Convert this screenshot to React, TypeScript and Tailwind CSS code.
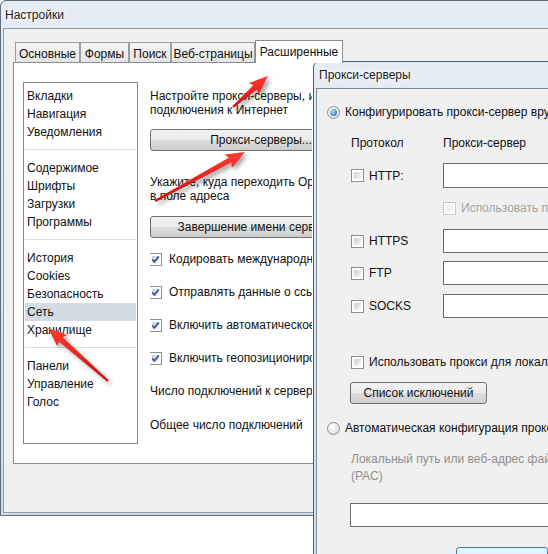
import React from 'react';

const tabs = [
  { label: 'Основные', w: 'w-[65px]' },
  { label: 'Формы', w: 'w-[49px]' },
  { label: 'Поиск', w: 'w-[42px]' },
  { label: 'Веб-страницы', w: 'w-[84px]' },
];

const groups = [
  ['Вкладки', 'Навигация', 'Уведомления'],
  ['Содержимое', 'Шрифты', 'Загрузки', 'Программы'],
  ['История', 'Cookies', 'Безопасность', 'Сеть', 'Хранилище'],
  ['Панели', 'Управление', 'Голос'],
];

const checks = [
  'Кодировать международные веб-адреса в UTF-8',
  'Отправлять данные о ссылающейся странице',
  'Включить автоматическое перенаправление',
  'Включить геопозиционирование',
];

function Check({ checked = false, disabled = false }: { checked?: boolean; disabled?: boolean }) {
  return (
    <span
      className={`relative inline-block h-[13px] w-[13px] shrink-0 border bg-white p-[2px] ${
        disabled ? 'border-[#c8c8c8]' : 'border-[#8e8f8f]'
      }`}
    >
      <span
        className={`block h-full w-full ${
          disabled ? 'bg-[#f0f0f0]' : 'bg-[linear-gradient(135deg,#cdd1d6,#f6f6f6)]'
        }`}
      />
      {checked && (
        <svg className="absolute left-0 top-0" width="11" height="11" viewBox="0 0 11 11">
          <path d="M2.2 5.4 L4.4 7.8 L8.8 2.4" stroke="#4659a2" strokeWidth="1.9" fill="none" />
        </svg>
      )}
    </span>
  );
}

function Radio({ on = false }: { on?: boolean }) {
  return (
    <span className="inline-flex h-[13px] w-[13px] shrink-0 items-center justify-center rounded-full border border-[#8e8f8f] bg-[radial-gradient(circle_at_35%_35%,#ffffff,#d2d6db)]">
      {on && (
        <span className="h-[7px] w-[7px] rounded-full bg-[radial-gradient(circle_at_35%_35%,#b5dcf7,#1c5ba3)]" />
      )}
    </span>
  );
}

function WinButton({ children, className = '' }: { children: React.ReactNode; className?: string }) {
  return (
    <div
      className={`flex shrink-0 items-center justify-center rounded-[3px] border border-[#707070] bg-[linear-gradient(#f2f2f2,#ebebeb_50%,#dddddd_50%,#cfcfcf)] whitespace-nowrap ${className}`}
    >
      {children}
    </div>
  );
}

function arrowPts(x1: number, y1: number, x2: number, y2: number) {
  const dx = x2 - x1;
  const dy = y2 - y1;
  const len = Math.hypot(dx, dy);
  const ux = dx / len;
  const uy = dy / len;
  const nx = -uy;
  const ny = ux;
  const hl = 17;
  const hw = 7.5;
  const bx = x2 - ux * hl;
  const by = y2 - uy * hl;
  const pts = [
    [x1 + nx * 1, y1 + ny * 1],
    [bx + nx * 2.8, by + ny * 2.8],
    [bx - ux * 2 + nx * hw, by - uy * 2 + ny * hw],
    [x2, y2],
    [bx - ux * 2 - nx * hw, by - uy * 2 - ny * hw],
    [bx - nx * 2.8, by - ny * 2.8],
    [x1 - nx * 1, y1 - ny * 1],
  ];
  return pts.map((p) => `${p[0].toFixed(1)},${p[1].toFixed(1)}`).join(' ');
}

const arrows = [
  [233, 107, 268, 76],
  [155, 201, 245, 152],
  [108, 381, 48, 328],
];

export default function App() {
  return (
    <div className="relative h-[554px] w-[548px] overflow-hidden bg-white font-['Liberation_Sans',Arial,sans-serif] text-[12px] text-[#111]">
      {/* orange strip at the top */}
      <div className="absolute left-[147px] top-0 h-[2px] w-[93px] rounded-b bg-[#f0a530]" />

      {/* main settings window */}
      <div className="absolute left-0 top-0 h-[516px] w-[620px] rounded-t-[6px] border border-[#5d6b7a] bg-[linear-gradient(#e6ecf3,#d2dce7)]">
        <div className="flex h-[27px] items-center pl-[4px] text-[12px] text-[#1a1a1a] [text-shadow:0_0_4px_#fff,0_0_6px_#fff,0_0_8px_#fff]">
          Настройки
        </div>
        <div className="ml-[2px] h-[485px] border border-[#8f9caa] bg-[#f0f0f0] pl-[9px] pt-[11px]">
          <div className="ml-[2px] flex h-[22px] items-end">
            {tabs.map((t) => (
              <div
                key={t.label}
                className={`flex h-[20px] ${t.w} items-center justify-center border border-b-0 border-[#9a9ea5] bg-[linear-gradient(#f6f6f6,#e4e4e4)] pt-[2px]`}
              >
                {t.label}
              </div>
            ))}
            <div className="relative z-10 -mb-px flex h-[23px] w-[88px] items-center justify-center border border-b-0 border-[#898c95] bg-white pb-[1px]">
              Расширенные
            </div>
          </div>
          <div className="flex h-[402px] border border-[#898c95] bg-white pl-[9px] pt-[19px]">
            {/* list */}
            <div className="h-[362px] w-[115px] shrink-0 border border-[#828790] px-[1px] pt-[4px]">
              {groups.map((g, gi) => (
                <div key={gi}>
                  {gi > 0 && <div className="mb-[9px] mt-[8px] h-px bg-[#dcdcdc]" />}
                  {g.map((item) => (
                    <div
                      key={item}
                      className={`flex h-[18px] items-center pl-[2px] ${item === 'Сеть' ? 'bg-[#d3dbe5]' : ''}`}
                    >
                      {item}
                    </div>
                  ))}
                </div>
              ))}
            </div>
            {/* right column, clipped where the proxy dialog covers it */}
            <div className="ml-[12px] flex w-[162px] flex-col overflow-hidden whitespace-nowrap">
              <div className="mt-[7px] leading-[14px]">
                <div>Настройте прокси-серверы, используемые для</div>
                <div>подключения к Интернет</div>
              </div>
              <WinButton className="mt-[12px] h-[22px] w-[222px]">Прокси-серверы...</WinButton>
              <div className="mt-[24px] leading-[14px]">
                <div>Укажите, куда переходить Opera, если имя не найдено</div>
                <div>в поле адреса</div>
              </div>
              <WinButton className="mt-[13px] h-[22px] w-[222px]">Завершение имени сервера...</WinButton>
              <div className="mt-[12px] flex flex-col gap-[15px]">
                {checks.map((c) => (
                  <div key={c} className="-ml-[1px] flex h-[18px] items-center gap-[7px]">
                    <Check checked />
                    <span>{c}</span>
                  </div>
                ))}
              </div>
              <div className="mt-[15px] flex h-[18px] items-center">Число подключений к серверу</div>
              <div className="mt-[16px] flex h-[18px] items-center">Общее число подключений</div>
            </div>
          </div>
        </div>
      </div>

      {/* proxy dialog */}
      <div className="absolute left-[313px] top-[61px] h-[520px] w-[360px] rounded-t-[6px] border border-[#4f5d6b] bg-[linear-gradient(#e6ecf3,#d2dce7)]">
        <div className="flex h-[26px] items-center pl-[5px] text-[12px] text-[#1a1a1a] [text-shadow:0_0_4px_#fff,0_0_6px_#fff,0_0_8px_#fff]">
          Прокси-серверы
        </div>
        <div className="ml-[2px] h-[500px] border border-[#7f8c99] bg-[#f0f0f0] pl-[10px] whitespace-nowrap">
          <div className="mt-[16px] flex h-[14px] items-center gap-[5px]">
            <Radio on />
            <span>Конфигурировать прокси-сервер вручную</span>
          </div>
          <div className="ml-[24px]">
            <div className="mt-[17px] flex h-[14px] items-center">
              <span className="w-[92px] shrink-0">Протокол</span>
              <span>Прокси-сервер</span>
            </div>
            <div className="mt-[13px] flex h-[25px] items-center">
              <div className="flex w-[92px] shrink-0 items-center gap-[5px]">
                <Check />
                <span>HTTP:</span>
              </div>
              <div className="h-[25px] w-[180px] shrink-0 border border-[#6b6b6b] bg-white" />
            </div>
            <div className="mt-[13px] flex h-[14px] items-center gap-[5px] pl-[92px] text-[#a3a3a3]">
              <Check disabled />
              <span>Использовать прокси для всех протоколов</span>
            </div>
            {[
              ['HTTPS', 'mt-[14px]'],
              ['FTP', 'mt-[8px]'],
              ['SOCKS', 'mt-[9px]'],
            ].map(([p, mt]) => (
              <div key={p} className={`${mt} flex h-[24px] items-center`}>
                <div className="flex w-[92px] shrink-0 items-center gap-[5px]">
                  <Check />
                  <span>{p}</span>
                </div>
                <div className="h-[24px] w-[180px] shrink-0 border border-[#6b6b6b] bg-white" />
              </div>
            ))}
            <div className="mt-[37px] flex h-[14px] items-center gap-[5px]">
              <Check />
              <span>Использовать прокси для локальных серверов</span>
            </div>
            <WinButton className="-ml-[1px] mt-[13px] h-[22px] w-[137px]">Список исключений</WinButton>
          </div>
          <div className="mt-[17px] flex h-[14px] items-center gap-[5px]">
            <Radio />
            <span>Автоматическая конфигурация прокси-сервера</span>
          </div>
          <div className="ml-[24px] mt-[16px] leading-[17px] text-[#8f8f8f]">
            <div>Локальный путь или веб-адрес файла конфигурации</div>
            <div>(PAC)</div>
          </div>
          <div className="ml-[23px] mt-[18px] h-[24px] w-[260px] border border-[#6b6b6b] bg-white" />
          <div className="ml-[129px] mt-[20px] h-[23px] w-[92px] rounded-[3px] border border-[#3c7fb1] bg-[linear-gradient(#eaf6fd,#d9f0fc_50%,#bee6fd_50%,#a7d9f5)]" />
        </div>
      </div>

      {/* red arrows */}
      <svg className="pointer-events-none absolute left-0 top-0" width="548" height="554" viewBox="0 0 548 554">
        <defs>
          <filter id="sh" x="-20%" y="-20%" width="140%" height="140%">
            <feGaussianBlur stdDeviation="2" />
          </filter>
          <linearGradient id="rd" x1="0" y1="0" x2="0" y2="1">
            <stop offset="0" stopColor="#ff3b30" />
            <stop offset="1" stopColor="#cc0f0f" />
          </linearGradient>
        </defs>
        {arrows.map(([x1, y1, x2, y2], i) => (
          <g key={i}>
            <polygon
              points={arrowPts(x1 + 3, y1 + 3, x2 + 3, y2 + 3)}
              fill="#000"
              opacity="0.35"
              filter="url(#sh)"
            />
            <polygon points={arrowPts(x1, y1, x2, y2)} fill="url(#rd)" />
          </g>
        ))}
      </svg>
    </div>
  );
}
